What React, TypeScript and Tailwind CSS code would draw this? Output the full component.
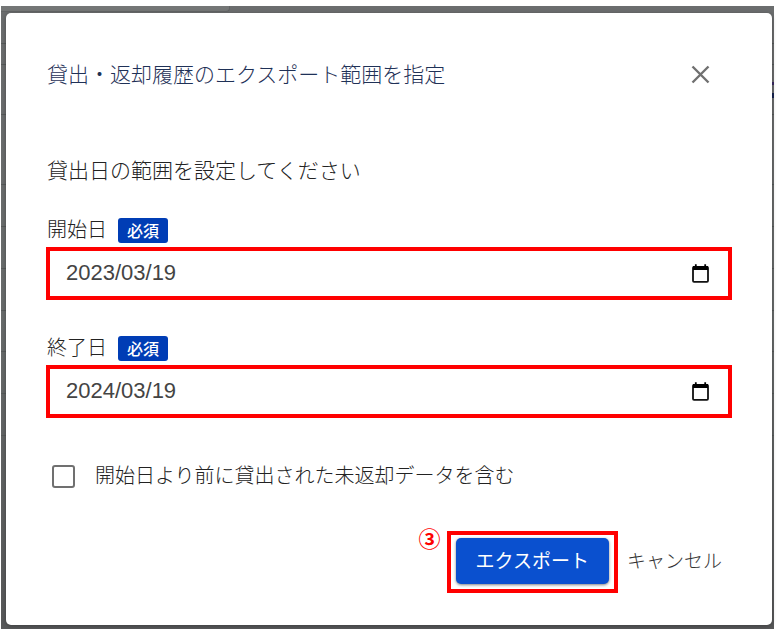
import { useState } from "react";

const FONT = "font-['Noto_Sans_CJK_JP',sans-serif]";

// Heights of the table rows on the dimmed page behind the dialog
const PAGE_ROWS = [
  "h-[32px]",
  "h-[21px]",
  "h-[50px]",
  "h-[70px]",
  "h-[42px]",
  "h-[42px]",
  "h-[42px]",
  "h-[41px]",
  "h-[42px]",
  "h-[42px]",
];

function DimmedPage() {
  return (
    <div
      aria-hidden="true"
      className="absolute inset-0 overflow-hidden bg-linear-to-b from-[#6b6d6e] via-[#686b6b] to-[#575859]"
    >
      <div className="h-[6px] w-[229px] rounded-br-[4px] border-r border-b border-[#626465] bg-[#747676]" />
      {PAGE_ROWS.map((height, i) => (
        <div key={i} className={`${height} flex flex-col items-end justify-center gap-2 border-b border-[#565959]`}>
          {i === 2 && (
            <>
              <span className="h-[3px] w-[3px] bg-[#3a2a62]" />
              <span className="h-[5px] w-[3px] bg-[#16234f]" />
            </>
          )}
        </div>
      ))}
    </div>
  );
}

function CalendarIcon() {
  return (
    <svg width="17" height="19" viewBox="0 0 17 19" fill="none" aria-hidden="true">
      <rect x="1" y="2.8" width="15" height="15" rx="1" stroke="#111" strokeWidth="1.8" />
      <path d="M1 2h15v4H1z" fill="#000" />
      <path d="M3.8 0.3v3M13.2 0.3v3" stroke="#000" strokeWidth="1.8" />
    </svg>
  );
}

type DateFieldProps = {
  id: string;
  label: string;
  value: string;
  onChange: (value: string) => void;
};

function DateField({ id, label, value, onChange }: DateFieldProps) {
  return (
    <div>
      <div className="flex h-[30px] items-start gap-[11px] pl-px">
        <label htmlFor={id} className="text-[20px] leading-6 font-light text-[#222]">
          {label}
        </label>
        <span className="mt-px flex h-[25px] items-center rounded-[3px] bg-[#003db5] px-[9px] pb-[2px] text-base font-medium text-white">
          必須
        </span>
      </div>
      <div className="flex h-[53px] items-center border-4 border-[#ff0000] pr-[19px] pb-px pl-4">
        <input
          id={id}
          type="text"
          value={value}
          onChange={(e) => onChange(e.target.value)}
          className="min-w-0 flex-1 bg-transparent font-['Liberation_Sans',sans-serif] text-[22px] leading-7 text-[#444] outline-none"
        />
        <button type="button" aria-label={`${label}を選択`}>
          <CalendarIcon />
        </button>
      </div>
    </div>
  );
}

export default function App() {
  const [start, setStart] = useState("2023/03/19");
  const [end, setEnd] = useState("2024/03/19");
  const [includeOpen, setIncludeOpen] = useState(false);

  return (
    <div className={`min-h-screen bg-white pt-[6px] pr-[3px] pl-px ${FONT}`}>
      <div className="relative min-h-[623px] pt-[7px] pr-[2px] pb-1 pl-[5px]">
        <DimmedPage />
        <div
          role="dialog"
          aria-labelledby="export-title"
          className="relative rounded-[5px] bg-white px-10 pt-[46px] pb-8 shadow-[0_1px_4px_rgba(0,0,0,0.3)]"
        >
          <header className="flex items-center justify-between pr-[22px] pl-px">
            <h1 id="export-title" className="pb-[2px] text-[21px] leading-7 font-light text-[#1f3157]">
              貸出・返却履歴のエクスポート範囲を指定
            </h1>
            <button type="button" aria-label="閉じる">
              <svg width="19" height="19" viewBox="0 0 19 19" fill="none" aria-hidden="true">
                <path d="M1.5 1.5l16 16M17.5 1.5l-16 16" stroke="#707070" strokeWidth="2.4" />
              </svg>
            </button>
          </header>

          <p className="mt-[66px] pb-[2px] pl-px text-[21px] leading-7 font-light text-[#222]">
            貸出日の範囲を設定してください
          </p>

          <div className="mt-8 flex flex-col gap-[35px]">
            <DateField id="start-date" label="開始日" value={start} onChange={setStart} />
            <DateField id="end-date" label="終了日" value={end} onChange={setEnd} />
          </div>

          <label className="mt-[42px] ml-[6px] flex items-center gap-5 text-[20px] leading-[30px] font-light text-[#222]">
            <input
              type="checkbox"
              checked={includeOpen}
              onChange={(e) => setIncludeOpen(e.target.checked)}
              className="size-[23px] shrink-0 appearance-none rounded-[3px] border-2 border-[#707070] checked:bg-[#0a50cf]"
            />
            <span className="pb-[2px]">開始日より前に貸出された未返却データを含む</span>
          </label>

          <div className="mt-[39px] flex items-start justify-end pr-[10px]">
            <span className="mr-[6px] text-[22px] leading-3 font-bold text-[#ff0000]">③</span>
            <div className="border-4 border-[#ff0000] p-[5px] pt-[3px]">
              <button
                type="button"
                className="h-[46px] rounded-[5px] bg-[#0a50cf] px-5 pb-[2px] text-[19px] text-white shadow-[0_1px_3px_rgba(0,0,0,0.5)]"
              >
                エクスポート
              </button>
            </div>
            <button type="button" className="ml-[9px] h-[60px] pb-[2px] text-[19px] font-light text-[#333]">
              キャンセル
            </button>
          </div>
        </div>
      </div>
    </div>
  );
}
